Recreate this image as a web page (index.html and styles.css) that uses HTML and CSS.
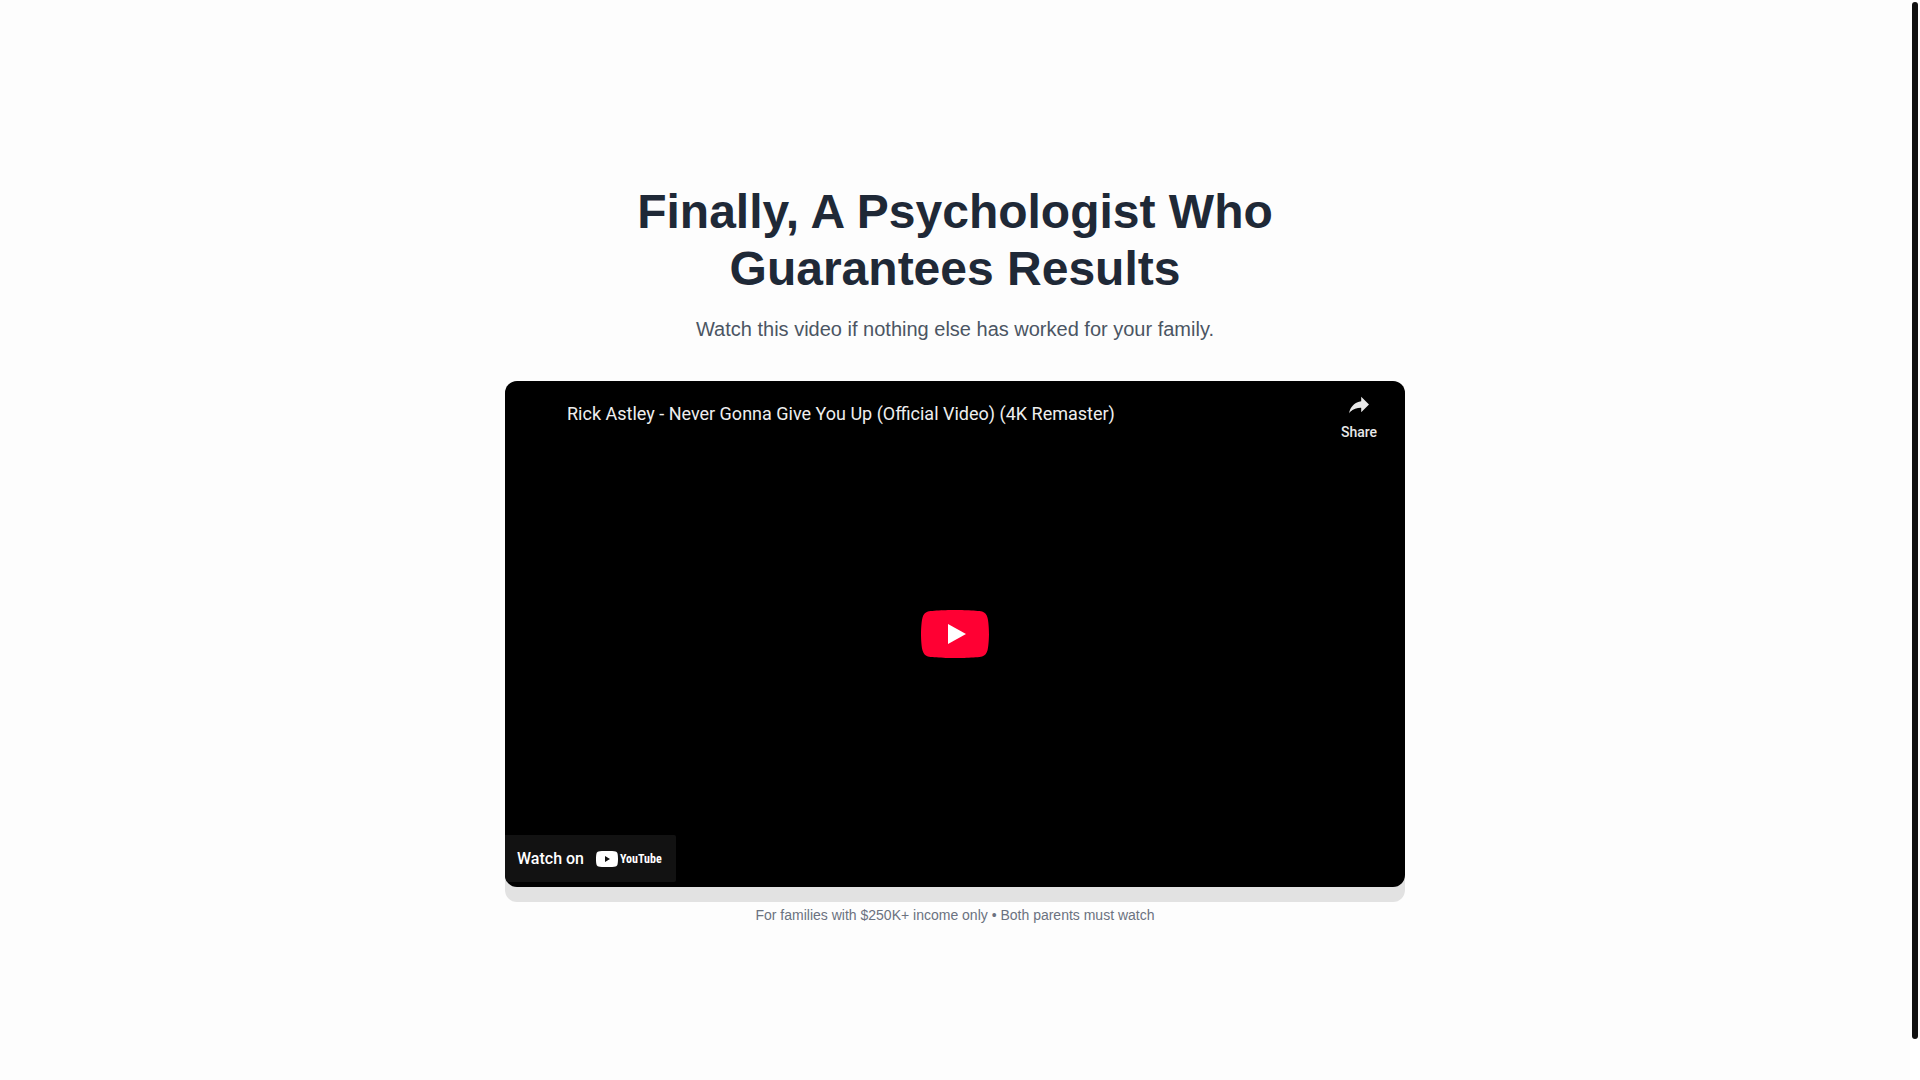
FILE: index.html
```html
<!DOCTYPE html>
<html lang="en">
<head>
<meta charset="UTF-8" />
<meta name="viewport" content="width=device-width, initial-scale=1" />
<title>Finally, A Psychologist Who Guarantees Results</title>
<link rel="stylesheet" href="styles.css">
</head>
<body>
  <main class="page">
    <header class="hero">
      <h1>Finally, A Psychologist Who Guarantees Results</h1>
      <p class="subtitle">Watch this video if nothing else has worked for your family.</p>
    </header>

    <div class="video-wrapper">
      <section class="player" aria-label="Video player">
        <div class="player-top">
          <a class="video-title" href="#">Rick Astley - Never Gonna Give You Up (Official Video) (4K Remaster)</a>
          <button class="share" type="button">
            <svg width="36" height="36" viewBox="0 0 36 36" aria-hidden="true">
              <path fill="currentColor" d="M20.2,14.19V9.74l7.79,7.79l-7.79,7.79v-4.56C16.27,20.69,12.1,21.81,9.34,24.76C8.8,25.13,7.6,27.29,8.12,25.65C9.08,21.32,11.8,17.18,15.98,15.38C17.31,14.78,18.74,14.4,20.2,14.19z"/>
            </svg>
            <span>Share</span>
          </button>
        </div>

        <button class="play" type="button" aria-label="Play">
          <svg width="68" height="48" viewBox="0 0 68 48" aria-hidden="true">
            <path fill="#ff0033" d="M66.52,7.74c-0.78-2.93-2.49-5.41-5.42-6.19C55.79,.13,34,0,34,0S12.21,.13,6.9,1.55C3.97,2.33,2.27,4.81,1.48,7.74C0.06,13.05,0,24,0,24s0.06,10.95,1.48,16.26c0.78,2.93,2.49,5.41,5.42,6.19C12.21,47.87,34,48,34,48s21.79-0.13,27.1-1.55c2.93-0.78,4.64-3.26,5.42-6.19C67.94,34.95,68,24,68,24S67.94,13.05,66.52,7.74z"/>
            <path fill="#fff" d="M45,24L27,14v20z"/>
          </svg>
        </button>

        <a class="watch-on" href="#">
          <span>Watch on</span>
          <span class="brand">
            <svg width="22" height="16" viewBox="0 0 22 16" aria-hidden="true">
              <path fill="#fff" fill-rule="evenodd" d="M11,0C15,0,18,.1,19.5,.5C20.6,.8,21.2,1.4,21.5,2.5C21.9,4,22,6,22,8S21.9,12,21.5,13.5C21.2,14.6,20.6,15.2,19.5,15.5C18,15.9,15,16,11,16S4,15.9,2.5,15.5C1.4,15.2,.8,14.6,.5,13.5C.1,12,0,10,0,8S.1,4,.5,2.5C.8,1.4,1.4,.8,2.5,.5C4,.1,7,0,11,0zM9,5v6l5-3z"/>
            </svg>
            <span class="wordmark">YouTube</span>
          </span>
        </a>
      </section>
    </div>

    <p class="note">For families with $250K+ income only • Both parents must watch</p>
  </main>

  <div class="scroll-track" aria-hidden="true"><div class="scroll-thumb"></div></div>
</body>
</html>
```

FILE: styles.css
```css
* {
  box-sizing: border-box;
}

body {
  margin: 0;
  padding-right: 10px;
  background: #fdfdfd;
  color: #1f2937;
  font-family: "Liberation Sans", Arial, sans-serif;
  text-rendering: optimizeLegibility;
}

.page {
  max-width: 940px;
  min-height: 100vh;
  margin: 0 auto;
  padding: 183px 20px 40px;
}

/* Heading */
.hero {
  max-width: 700px;
  margin: 0 auto 39px;
  text-align: center;
}

h1 {
  margin: 0 0 20px;
  font-size: 48px;
  font-weight: 700;
  line-height: 57px;
}

.subtitle {
  margin: 0;
  color: #4b5563;
  font-size: 20px;
  line-height: 25px;
}

/* Video */
.video-wrapper {
  padding-bottom: 15px;
  background: #e2e2e2;
  border-radius: 12px;
}

.player {
  display: flex;
  flex-direction: column;
  justify-content: space-between;
  position: relative;
  aspect-ratio: 16 / 9;
  background: #000;
  border-radius: 12px;
  overflow: hidden;
  font-family: Roboto, sans-serif;
}

.player-top {
  display: flex;
  justify-content: space-between;
  align-items: flex-start;
  padding: 6px 20px 0 62px;
}

.video-title {
  margin-top: 14px;
  color: #eee;
  font-size: 18px;
  line-height: 26px;
  text-decoration: none;
}

button {
  padding: 0;
  border: none;
  background: none;
  cursor: pointer;
}

.share {
  display: flex;
  flex-direction: column;
  align-items: center;
  width: 52px;
  color: #e8e8e8;
  font-family: inherit;
  font-size: 14px;
  font-weight: 500;
  line-height: 18px;
}

/* Play button lies over the video */
.play {
  position: absolute;
  top: 50%;
  left: 50%;
  width: 68px;
  height: 48px;
  transform: translate(-50%, -50%);
}

.play svg,
.brand svg {
  display: block;
}

.watch-on {
  display: flex;
  align-items: center;
  align-self: flex-start;
  gap: 12px;
  height: 47px;
  margin-bottom: 5px;
  padding: 0 14px 0 12px;
  background: #121212;
  border-radius: 0 2px 2px 0;
  color: #fff;
  font-size: 16px;
  font-weight: 500;
  text-decoration: none;
}

.brand {
  display: flex;
  align-items: center;
  gap: 2px;
}

.wordmark {
  font-family: "Roboto Condensed", "Noto Sans CJK JP", sans-serif;
  font-size: 12px;
  font-weight: 700;
  line-height: 16px;
}

.note {
  margin: 4px 0 0;
  color: #6b7280;
  font-size: 14px;
  line-height: 18px;
  text-align: center;
}

/* Slim scrollbar at the window edge */
.scroll-track {
  position: fixed;
  top: 0;
  right: 0;
  bottom: 0;
  width: 10px;
  padding: 2px;
  background: #fff;
}

.scroll-thumb {
  height: 96.4%;
  border-radius: 3px;
  background: #111;
}
```
